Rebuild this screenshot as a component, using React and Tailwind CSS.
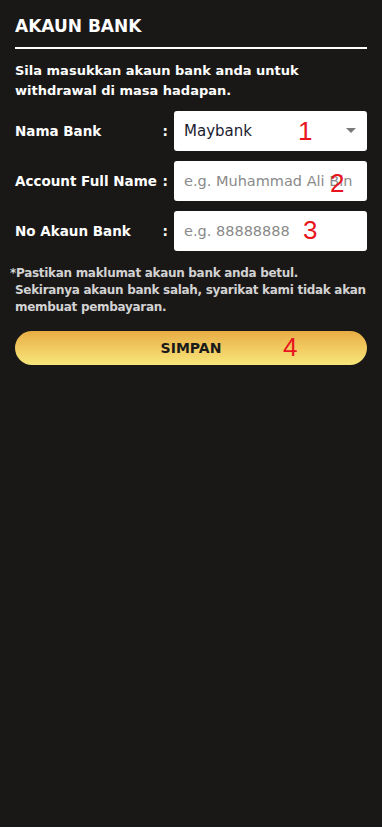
import React from "react";

const font = { fontFamily: '"DejaVu Sans", "Open Sans", sans-serif' };
const markFont = { fontFamily: '"Liberation Sans", sans-serif' };

function Row({ label, children, mark, markClass }) {
  return (
    <div className="relative flex items-center gap-[6px]">
      <div className="flex w-[153px] shrink-0 justify-between text-[13.5px] font-bold text-white">
        <span>{label}</span>
        <span>:</span>
      </div>
      <div className="h-10 flex-1">{children}</div>
      <span className={`pointer-events-none absolute text-[26px] leading-none text-[#e8141e] ${markClass}`} style={markFont}>
        {mark}
      </span>
    </div>
  );
}

export default function App() {
  return (
    <div className="min-h-[827px] w-full bg-[#1a1817] px-[15px] pt-[14px]" style={font}>
      <h1 className="text-[17px] font-bold leading-6 text-white">AKAUN BANK</h1>
      <div className="mt-[9px] h-[2px] w-full bg-white"></div>

      <p className="mt-[12px] text-[13px] font-bold leading-5 text-white">
        Sila masukkan akaun bank anda untuk withdrawal di masa hadapan.
      </p>

      <div className="mt-[10px] flex flex-col gap-[10px]">
        <Row label="Nama Bank" mark="1" markClass="left-[283px] top-[7px]">
          <div className="flex h-full items-center justify-between rounded-[3px] bg-white pl-[10px] pr-[10px]">
            <span className="text-[15px] text-[#1b1b2f]">Maybank</span>
            <svg width="10" height="6" viewBox="0 0 10 6" className="mr-[1px]">
              <path d="M0 0h10L5 5z" fill="#7a7a7a" />
            </svg>
          </div>
        </Row>
        <Row label="Account Full Name" mark="2" markClass="left-[315px] top-[9px]">
          <input
            className="h-full w-full rounded-[3px] bg-white px-[10px] text-[14.5px] text-[#1b1b2f] outline-none placeholder:text-[#8a8a8a]"
            style={font}
            placeholder="e.g. Muhammad Ali Bin Abu"
          />
        </Row>
        <Row label="No Akaun Bank" mark="3" markClass="left-[288px] top-[6px]">
          <input
            className="h-full w-full rounded-[3px] bg-white px-[10px] text-[14.5px] text-[#1b1b2f] outline-none placeholder:text-[#8a8a8a]"
            style={font}
            placeholder="e.g. 88888888"
          />
        </Row>
      </div>

      <p className="-ml-[5px] mt-[14px] pl-[5px] text-[12px] font-bold leading-[17px] tracking-[-0.3px] text-[#d2d2d2] [text-indent:-5px]">
        *Pastikan maklumat akaun bank anda betul.
        <br />
        Sekiranya akaun bank salah, syarikat kami tidak akan
        <br />
        membuat pembayaran.
      </p>

      <button
        className="relative mt-[15px] flex h-[34px] w-full items-center justify-center rounded-full bg-gradient-to-b from-[#e8ad44] to-[#f7e77b] text-[14px] font-bold text-[#1a1a1a]"
        style={font}
      >
        SIMPAN
        <span className="absolute left-[268px] top-[3px] text-[26px] font-normal leading-none text-[#e8141e]" style={markFont}>
          4
        </span>
      </button>
    </div>
  );
}
